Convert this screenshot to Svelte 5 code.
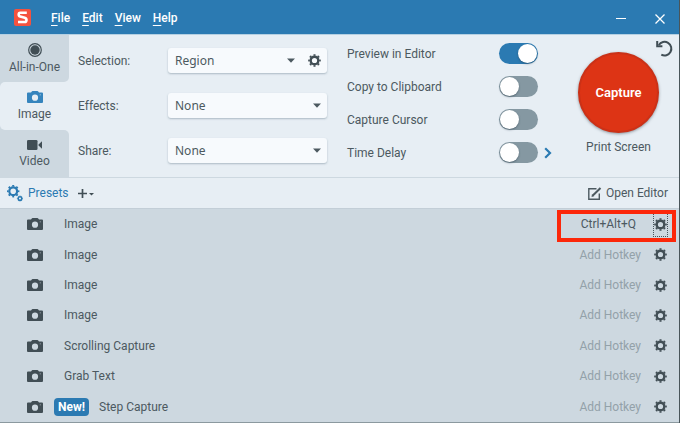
<script lang="ts">
    const menus = ['File', 'Edit', 'View', 'Help'];

    const tabs = [
        { id: 'all', label: 'All-in-One' },
        { id: 'image', label: 'Image' },
        { id: 'video', label: 'Video' }
    ];
    let activeTab = $state('image');

    let selection = $state('Region');
    let effects = $state('None');
    let share = $state('None');

    let options = $state([
        { id: 'preview', label: 'Preview in Editor', on: true },
        { id: 'clipboard', label: 'Copy to Clipboard', on: false },
        { id: 'cursor', label: 'Capture Cursor', on: false },
        { id: 'delay', label: 'Time Delay', on: false }
    ]);

    const presets = [
        { name: 'Image', hotkey: 'Ctrl+Alt+Q', marked: true },
        { name: 'Image' },
        { name: 'Image' },
        { name: 'Image' },
        { name: 'Scrolling Capture' },
        { name: 'Grab Text' },
        { name: 'Step Capture', isNew: true }
    ];
</script>

{#snippet gear(size: number)}
    <svg width={size} height={size} viewBox="0 0 14 14" fill="none" stroke="currentColor">
        <circle cx="7" cy="7" r="4.100" stroke-width="2.600" />
        <circle cx="7" cy="7" r="5.900" stroke-width="1.800" pathLength="16" stroke-dasharray="0.95 1.05" stroke-dashoffset="0.475" />
    </svg>
{/snippet}

{#snippet camera()}
    <svg width="16" height="12" viewBox="0 0 16 12">
        <path fill="currentColor" fill-rule="evenodd" d="M1 1.5h3L5 .3Q5.300 0 5.700 0h4.600q.4 0 .7.3l1 1.200h3q1 0 1 1V11q0 1-1 1H1q-1 0-1-1V2.500q0-1 1-1zM8 3.600a3.100 3.100 0 1 0 0 6.200a3.100 3.100 0 0 0 0-6.200zM12.800 3.400v.9h.9V3.400z" />
    </svg>
{/snippet}

{#snippet caret()}
    <svg class="caret" width="8" height="5" viewBox="0 0 8 5"><path fill="currentColor" d="M0 .5h8L4 4.800z" /></svg>
{/snippet}

<div class="window">
    <header class="title-bar">
        <svg class="logo" width="17" height="17" viewBox="0 0 17 17">
            <rect width="17" height="17" rx="2" fill="#f4523f" />
            <path d="M12.800 3.700H6.300Q4.700 3.700 4.700 5.500T6.300 7.500l4.400 1.200q1.800.5 1.800 2.400T10.700 13H4" fill="none" stroke="#fff" stroke-width="2.600" />
        </svg>
        <nav class="menus">
            {#each menus as menu}
                <button class="menu"><u>{menu[0]}</u>{menu.slice(1)}</button>
            {/each}
        </nav>
        <div class="window-buttons">
            <button aria-label="Minimize">
                <svg width="10" height="10" viewBox="0 0 10 10" stroke="currentColor"><path d="M0 4.500h10" /></svg>
            </button>
            <button aria-label="Close">
                <svg width="10" height="10" viewBox="0 0 10 10" stroke="currentColor" stroke-width="1.300"><path d="M.5.5l9 9M9.500.5l-9 9" /></svg>
            </button>
        </div>
    </header>

    <main class="capture-panel">
        <nav class="tabs">
            {#each tabs as tab}
                <button class="tab" class:active={activeTab === tab.id} onclick={() => (activeTab = tab.id)}>
                    <span class="tab-icon">
                        {#if tab.id === 'all'}
                            <svg width="14" height="14" viewBox="0 0 14 14">
                                <circle cx="7" cy="7" r="6.300" fill="none" stroke="currentColor" stroke-width="1.200" />
                                <circle cx="7" cy="7" r="4.700" fill="currentColor" />
                            </svg>
                        {:else if tab.id === 'image'}
                            {@render camera()}
                        {:else}
                            <svg width="15" height="10" viewBox="0 0 15 10" fill="currentColor">
                                <rect width="10.500" height="10" rx="1.300" />
                                <path d="M11.500 4.500L15 1.200v7.600l-3.500-3.300z" />
                            </svg>
                        {/if}
                    </span>
                    {tab.label}
                </button>
            {/each}
        </nav>

        <div class="form">
            <label for="selection">Selection:</label>
            <div class="field">
                <div class="picker">
                    <select id="selection" bind:value={selection}>
                        <option>Region</option>
                        <option>Window</option>
                        <option>Fullscreen</option>
                    </select>
                    {@render caret()}
                </div>
                <button class="icon-btn field-gear" aria-label="Selection settings">{@render gear(13)}</button>
            </div>

            <label for="effects">Effects:</label>
            <div class="field">
                <div class="picker">
                    <select id="effects" bind:value={effects}>
                        <option>None</option>
                        <option>Border</option>
                    </select>
                    {@render caret()}
                </div>
            </div>

            <label for="share">Share:</label>
            <div class="field">
                <div class="picker">
                    <select id="share" bind:value={share}>
                        <option>None</option>
                        <option>File</option>
                    </select>
                    {@render caret()}
                </div>
            </div>
        </div>

        <div class="options">
            {#each options as option}
                <div class="option">
                    <label for={option.id}>{option.label}</label>
                    <input class="toggle" type="checkbox" id={option.id} bind:checked={option.on} />
                    {#if option.id === 'delay'}
                        <button class="icon-btn more" aria-label="Time delay settings">
                            <svg width="8" height="12" viewBox="0 0 8 12"><path d="M1.200 1.200L6 6l-4.800 4.800" fill="none" stroke="currentColor" stroke-width="2.200" /></svg>
                        </button>
                    {/if}
                </div>
            {/each}
        </div>

        <div class="shoot">
            <button class="icon-btn reset" aria-label="Reset">
                <svg width="17" height="17" viewBox="0 0 17 17" fill="none" stroke="currentColor" stroke-width="2">
                    <path d="M2.800 5A6.800 6.800 0 1 1 5.300 14.600" />
                    <path d="M1.200 1v5.200h5.200" />
                </svg>
            </button>
            <button class="capture-btn">Capture</button>
            <span>Print Screen</span>
        </div>
    </main>

    <div class="preset-bar">
        <button class="presets-btn">
            <svg width="16" height="17" viewBox="0 0 16 17" fill="none" stroke="currentColor">
                <circle cx="6.200" cy="6.200" r="3.900" stroke-width="2.200" />
                <circle cx="6.200" cy="6.200" r="5.400" stroke-width="1.600" pathLength="16" stroke-dasharray="0.95 1.05" stroke-dashoffset="0.475" />
                <circle cx="13" cy="13.500" r="1.800" stroke-width="1.500" />
                <circle cx="13" cy="13.500" r="2.600" stroke-width=".8" pathLength="16" stroke-dasharray="1 1" stroke-dashoffset="0.5" />
            </svg>
            Presets
        </button>
        <button class="icon-btn add" aria-label="Add preset">
            <svg width="16" height="9" viewBox="0 0 16 9">
                <path d="M4.500 0v9M0 4.500h9" stroke="currentColor" stroke-width="1.700" />
                <path d="M11 4h5l-2.500 2.500z" fill="currentColor" />
            </svg>
        </button>
        <button class="editor-btn">
            <svg width="14" height="13" viewBox="0 0 14 13" fill="none" stroke="currentColor">
                <path d="M8.500 1.800H.8v10.400h10.500V6.500" stroke-width="1.400" />
                <path d="M4.800 8.500L12.500 1" stroke-width="2" />
                <path d="M3.800 9.600l.5-2 1.500 1.500z" fill="currentColor" stroke-width=".6" />
            </svg>
            Open Editor
        </button>
    </div>

    <ul class="preset-list">
        {#each presets as preset}
            <li class="preset" class:marked={preset.marked}>
                <span class="preset-icon">{@render camera()}</span>
                {#if preset.isNew}
                    <span class="new-badge">New!</span>
                {/if}
                <span class="preset-name">{preset.name}</span>
                <button class="hotkey" class:assigned={preset.hotkey}>{preset.hotkey ?? 'Add Hotkey'}</button>
                <button class="icon-btn preset-gear" aria-label="Preset settings">{@render gear(13)}</button>
            </li>
        {/each}
    </ul>
</div>

<style>
    :global(body) { margin: 0; background: #49555a; }

    .window {
        box-sizing: border-box; min-height: 100vh; margin-right: 1px;
        display: flex; flex-direction: column;
        border-bottom: 1px solid #8b999f;
        background: #e7eef4; color: #4c5960;
        font-family: Roboto, "Liberation Sans", sans-serif; font-size: 12px; line-height: 16px;
    }
    button {
        font: inherit; color: inherit; background: none; border: none; padding: 0; cursor: pointer;
    }
    svg { display: block; flex: none; }
    .icon-btn { display: flex; align-items: center; justify-content: center; color: #414e55; }

    .title-bar {
        display: flex; align-items: center; height: 34px; padding: 0 14px;
        background: #2b7ab2; color: #fff; border-bottom: 1px solid #b5d0e2;
    }
    .menus { display: flex; gap: 12px; margin-left: 20px; padding-top: 2px; font-weight: 500; }
    .menu u { text-underline-offset: 3px; text-decoration-thickness: 1px; }
    .window-buttons { display: flex; gap: 29px; margin-left: auto; padding-top: 4px; }

    .capture-panel { display: flex; height: 142px; border-bottom: 1px solid #cdd8e0; }

    /* right half shows through the rounded corners of the inactive tabs */
    .tabs {
        flex: none; width: 69px; display: grid; grid-template-rows: repeat(3, 1fr);
        background: linear-gradient(to right, #cdd8e0 50%, #e7eef4 50%);
    }
    .tab {
        display: flex; flex-direction: column; align-items: center; justify-content: center; gap: 1px;
        background: #cdd8e0; border-radius: 0 5px 5px 0;
    }
    .tab:first-child { border-top-right-radius: 0; }
    .tab:last-child { border-bottom-right-radius: 0; }
    .tab.active { background: #e7eef4; border-radius: 5px 0 0 5px; }
    .tab-icon { height: 15px; display: flex; align-items: center; color: #414e55; }
    .tab.active .tab-icon { color: #3584bd; }

    .form {
        flex: 1; display: grid; grid-template-columns: 90px 1fr; grid-auto-rows: 25px; row-gap: 20px;
        align-items: center; padding: 13px 20px 0 9px;
    }
    .field {
        display: flex; height: 25px; background: #f7fafd; border-radius: 3px;
        box-shadow: 0 1px 2px rgba(60, 85, 105, 0.35);
    }
    .picker { flex: 1; display: grid; align-items: center; }
    .picker select {
        grid-area: 1 / 1; width: 100%; height: 25px; padding: 0 20px 0 7px;
        appearance: none; border: none; background: none; color: inherit;
        font-family: "Noto Sans", sans-serif; font-size: 12px;
    }
    .picker :global(.caret) { grid-area: 1 / 1; justify-self: end; margin-right: 6px; pointer-events: none; }
    .field-gear { width: 26px; }

    .options { flex: none; width: 206px; display: flex; flex-direction: column; gap: 12px; padding-top: 8px; }
    .option { display: flex; align-items: center; height: 21px; }
    .option label { width: 152px; }
    .toggle {
        appearance: none; box-sizing: border-box; width: 39px; height: 21px; margin: 0; padding: 1px;
        display: flex; border-radius: 11px; background: #8598a2; cursor: pointer;
    }
    .toggle::before {
        content: ""; width: 19px; height: 19px; border-radius: 50%; background: #fff;
        box-shadow: 0 1px 2px rgba(40, 60, 75, 0.5);
    }
    .toggle:checked { background: #2b7ab2; justify-content: flex-end; }
    .more { margin-left: 6px; color: #2b7ab2; }

    .shoot {
        position: relative; flex: none; width: 126px; box-sizing: border-box; padding: 17px 0 0 5px;
        display: flex; flex-direction: column; align-items: center; gap: 6px;
    }
    .capture-btn {
        width: 81px; height: 81px; border-radius: 50%; border: 2px solid #cb3117;
        background: #dd3415; color: #fff; font-size: 13px; font-weight: 600;
        box-shadow: 0 1px 3px rgba(50, 60, 70, 0.5);
    }
    .reset { position: absolute; top: 5px; right: 6px; }

    .preset-bar {
        display: flex; align-items: center; height: 30px; padding: 0 11px 0 7px;
        border-bottom: 1px solid #c3ced7;
    }
    .presets-btn { display: flex; align-items: center; gap: 5px; color: #2b7ab2; }
    .add { margin-left: 9px; }
    .editor-btn { display: flex; align-items: center; gap: 4px; margin-left: auto; }

    .preset-list {
        flex: 1; display: grid; grid-auto-rows: minmax(30px, 1fr);
        margin: 0; padding: 0; list-style: none; background: #cdd8e0;
    }
    .preset { position: relative; display: flex; align-items: center; padding: 0 12px 0 27px; }
    .preset-icon { width: 27px; color: #414e55; }
    .preset-name { margin-left: 10px; }
    .new-badge {
        padding: 1px 4px; border-radius: 4px; background: #2b7ab2; color: #fff; font-weight: 700;
    }
    .hotkey { margin-left: auto; color: #93a1a9; }
    .hotkey.assigned { color: #4c5960; margin-right: 5px; }
    .preset-gear { width: 13px; height: 24px; margin-left: 13px; }
    .marked .preset-gear { outline: 1px dotted #46545b; }
    .marked::after {
        content: ""; position: absolute; top: 1px; right: 3px; bottom: -3px; width: 111px;
        border: 4px solid #fc270a; pointer-events: none;
    }
</style>
